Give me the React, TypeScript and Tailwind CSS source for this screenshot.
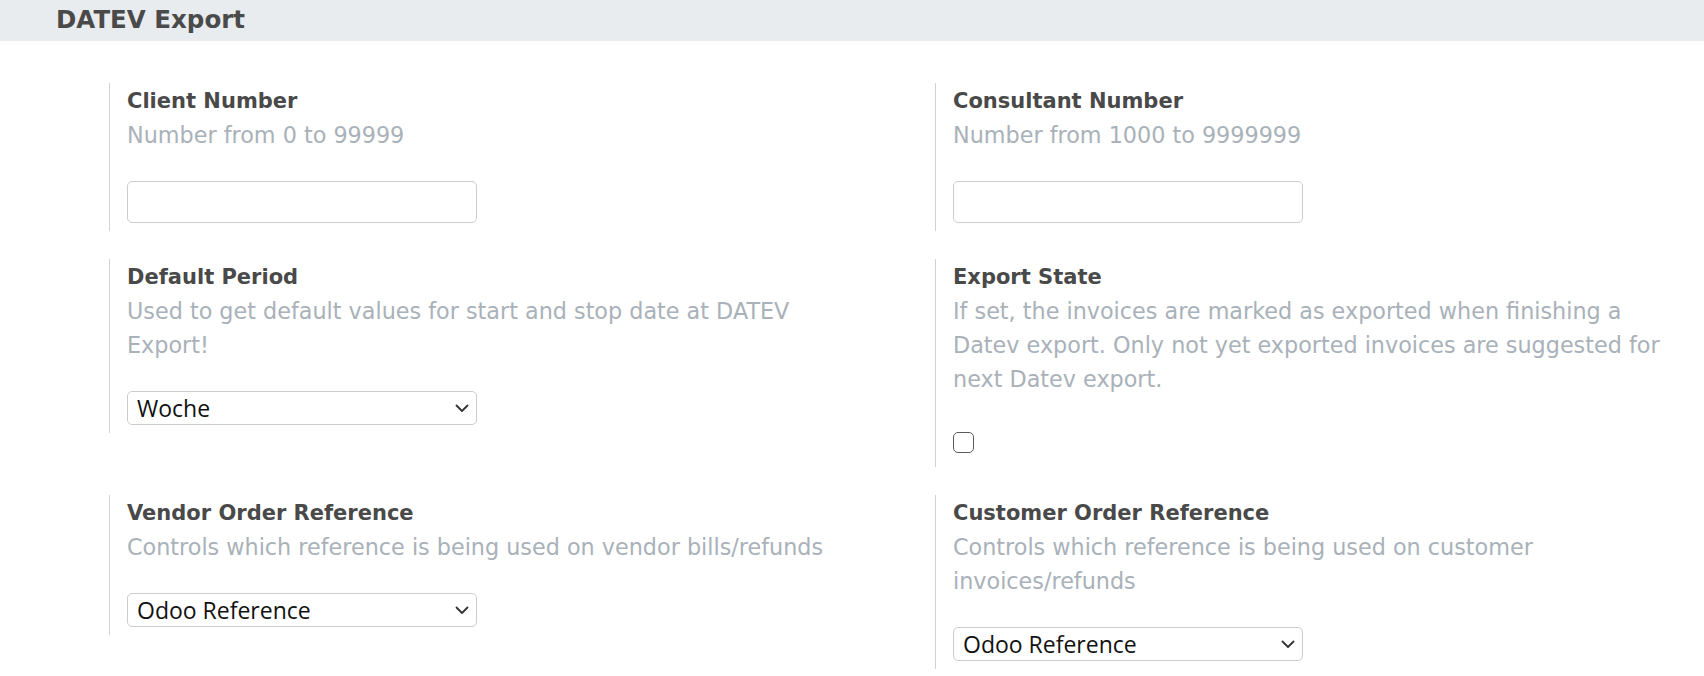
import React from "react";

const ChevronDown = () => (
  <svg width="14" height="9" viewBox="0 0 14 9" fill="none" className="shrink-0">
    <path d="M1.5 1.5L7 7L12.5 1.5" stroke="#333" strokeWidth="1.8" strokeLinecap="round" strokeLinejoin="round" />
  </svg>
);

const FakeSelect = ({ value }: { value: string }) => (
  <div className="flex h-[34px] w-[350px] items-center justify-between rounded-[5px] border border-[#cccccc] bg-white pl-[9px] pr-[7px]">
    <span className="font-['Open_Sans'] text-[23px] leading-none text-[#111]">{value}</span>
    <ChevronDown />
  </div>
);

interface SettingProps {
  title: string;
  help: string;
  children: React.ReactNode;
}

const Setting = ({ title, help, children }: SettingProps) => (
  <div className="border-l border-[#d2d2d2] pb-[8px] pl-[17px]">
    <div className="h-[35px] pt-[1px] text-[21px] font-bold leading-[34px] text-[#494949]">{title}</div>
    <div className="max-w-[715px] text-[22.3px] leading-[34px] text-[#a9b1b9]">{help}</div>
    <div className="mt-[29px]">{children}</div>
  </div>
);

export default function App() {
  return (
    <div className="min-h-screen bg-white font-['DejaVu_Sans',sans-serif]">
      {/* Section header */}
      <div className="flex h-[41px] items-center bg-[#e9ecef] pl-[56px]">
        <h2 className="text-[24.5px] font-bold text-[#4a4a4a]">DATEV Export</h2>
      </div>

      {/* Settings */}
      <div className="grid grid-cols-[826px_1fr] items-start gap-y-[28px] pl-[109px] pt-[42px]">
        <Setting title="Client Number" help="Number from 0 to 99999">
          <div className="h-[42px] w-[350px] rounded-[5px] border border-[#cccccc] bg-white" />
        </Setting>

        <Setting title="Consultant Number" help="Number from 1000 to 9999999">
          <div className="h-[42px] w-[350px] rounded-[5px] border border-[#cccccc] bg-white" />
        </Setting>

        <Setting
          title="Default Period"
          help="Used to get default values for start and stop date at DATEV Export!"
        >
          <FakeSelect value="Woche" />
        </Setting>

        <Setting
          title="Export State"
          help="If set, the invoices are marked as exported when finishing a Datev export. Only not yet exported invoices are suggested for next Datev export."
        >
          <div className="flex h-[34px] items-center">
            <div className="h-[21px] w-[21px] rounded-[5px] border-[1.5px] border-[#5a5a5a] bg-white" />
          </div>
        </Setting>

        <Setting
          title="Vendor Order Reference"
          help="Controls which reference is being used on vendor bills/refunds"
        >
          <FakeSelect value="Odoo Reference" />
        </Setting>

        <Setting
          title="Customer Order Reference"
          help="Controls which reference is being used on customer invoices/refunds"
        >
          <FakeSelect value="Odoo Reference" />
        </Setting>
      </div>
    </div>
  );
}
